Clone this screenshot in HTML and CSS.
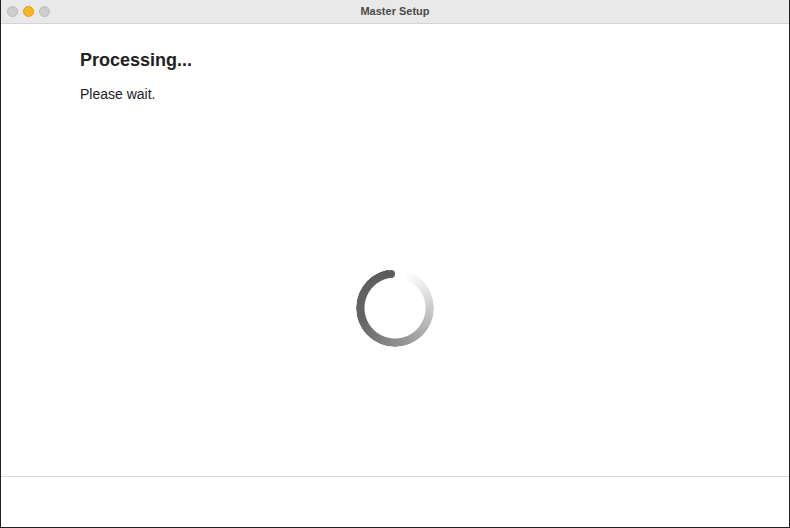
FILE: index.html
```html
<!DOCTYPE html>
<html>
<head>
<meta charset="utf-8">
<link rel="stylesheet" href="styles.css">
</head>
<body>
<div class="window">
  <div class="titlebar">
    <div class="lights">
      <span class="light gray"></span>
      <span class="light yellow"></span>
      <span class="light gray"></span>
    </div>
    <div class="title">Master Setup</div>
  </div>
  <div class="content">
    <h1 class="heading">Processing...</h1>
    <p class="sub">Please wait.</p>
    <div class="spinner-area">
      <div class="spinner-wrap">
        <div class="spinner"></div>
        <span class="cap"></span>
      </div>
    </div>
  </div>
  <div class="footer"></div>
</div>
</body>
</html>
```
FILE: styles.css
```css
html, body {
  margin: 0;
  padding: 0;
  width: 790px;
  height: 528px;
  overflow: hidden;
  background: #fff;
}
.window {
  width: 790px;
  height: 528px;
  box-sizing: border-box;
  display: flex;
  flex-direction: column;
  border-left: 1px solid #222;
  border-right: 1px solid #222;
  border-bottom: 1px solid #222;
  font-family: "Helvetica Neue", "Liberation Sans", Arial, sans-serif;
}
.titlebar {
  height: 24px;
  flex: 0 0 24px;
  box-sizing: border-box;
  background: #e9e9e9;
  border-bottom: 1px solid #d4d4d4;
  position: relative;
  display: flex;
  align-items: center;
  justify-content: center;
}
.lights {
  position: absolute;
  left: 6px;
  top: 6px;
  display: flex;
  gap: 5px;
}
.light {
  width: 11px;
  height: 11px;
  border-radius: 50%;
  box-sizing: border-box;
}
.light.gray { background: #cdcdcd; border: 0.5px solid #bcbcbc; }
.light.yellow { background: #f6b42a; border: 0.5px solid #e0a020; }
.title {
  font-size: 11px;
  font-weight: bold;
  color: #4a4a4a;
  margin-top: -1px;
}
.content {
  flex: 1;
  display: flex;
  flex-direction: column;
  padding: 0 0 0 79px;
  border-bottom: 1px solid #d9d9d9;
}
.heading {
  margin: 25px 0 0 0;
  font-size: 18px;
  font-weight: bold;
  color: #222;
  line-height: 22px;
}
.sub {
  margin: 14px 0 0 0;
  font-size: 14px;
  color: #222;
  line-height: 18px;
}
.spinner-area {
  flex: 1;
  display: flex;
  justify-content: center;
  align-items: flex-start;
  padding: 166px 79px 0 0;
}
.spinner-wrap {
  width: 78px;
  height: 78px;
  position: relative;
  filter: blur(0.5px);
}
.spinner {
  width: 78px;
  height: 78px;
  border-radius: 50%;
  background: conic-gradient(from -9deg,
    rgba(95,95,95,0) 0deg,
    rgba(95,95,95,0) 25deg,
    rgba(120,120,120,0.15) 60deg,
    rgba(120,120,120,0.45) 110deg,
    rgba(125,125,125,0.85) 180deg,
    rgba(100,100,100,1) 260deg,
    rgba(92,92,92,1) 360deg);
  -webkit-mask: radial-gradient(circle, transparent 30px, #000 31px, #000 38.5px, transparent 39.5px);
  mask: radial-gradient(circle, transparent 30px, #000 31px, #000 38.5px, transparent 39.5px);
}
.cap {
  position: absolute;
  width: 8.5px;
  height: 8.5px;
  border-radius: 50%;
  background: #5c5c5c;
  left: 30.5px;
  top: 0.6px;
}
.footer {
  height: 50px;
  flex: 0 0 50px;
}
```
